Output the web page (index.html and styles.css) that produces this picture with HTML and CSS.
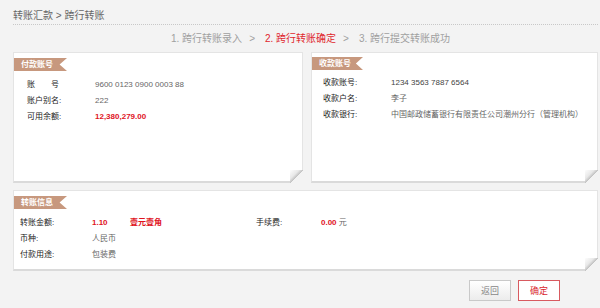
FILE: index.html
```html
<!DOCTYPE html>
<html lang="zh-CN">
<head>
    <meta charset="UTF-8">
    <meta name="viewport" content="width=device-width, initial-scale=1.0">
    <title>跨行转账确定</title>
    <link rel="stylesheet" href="styles.css">
</head>
<body>
    <div class="page">
        <div class="crumb">转账汇款 &gt; 跨行转账</div>

        <div class="steps">
            <span>1. 跨行转账录入</span>
            <span class="sep">&gt;</span>
            <span class="active">2. 跨行转账确定</span>
            <span class="sep">&gt;</span>
            <span>3. 跨行提交转账成功</span>
        </div>

        <div class="cards">
            <div class="card card-pay">
                <div class="ribbon">付款账号</div>
                <div class="rows">
                    <div class="row"><span class="label">账&emsp;&emsp;号</span><span class="value">9600 0123 0900 0003 88</span></div>
                    <div class="row"><span class="label">账户别名:</span><span class="value">222</span></div>
                    <div class="row"><span class="label">可用余额:</span><span class="value money">12,380,279.00</span></div>
                </div>
            </div>
            <div class="card card-recv">
                <div class="ribbon">收款账号</div>
                <div class="rows">
                    <div class="row"><span class="label">收款账号:</span><span class="value dark">1234 3563 7887 6564</span></div>
                    <div class="row"><span class="label">收款户名:</span><span class="value">李子</span></div>
                    <div class="row"><span class="label">收款银行:</span><span class="value">中国邮政储蓄银行有限责任公司潮州分行（管理机构）</span></div>
                </div>
            </div>
        </div>

        <div class="card card-info">
            <div class="ribbon">转账信息</div>
            <div class="info">
                <div class="rows">
                    <div class="row"><span class="label">转账金额:</span><span class="value money amount">1.10</span><span class="money">壹元壹角</span></div>
                    <div class="row"><span class="label">币种:</span><span class="value">人民币</span></div>
                    <div class="row"><span class="label">付款用途:</span><span class="value">包装费</span></div>
                </div>
                <div class="rows fee">
                    <div class="row"><span class="label">手续费:</span><span class="money">0.00</span>&nbsp;<span class="value">元</span></div>
                </div>
            </div>
        </div>

        <div class="actions">
            <button class="btn">返回</button>
            <button class="btn btn-ok">确定</button>
        </div>
    </div>
</body>
</html>
```

FILE: styles.css
```css
body { margin: 0; background: #f3f3f3; font-family: "Liberation Sans", "Noto Sans CJK SC", sans-serif; color: #333; }
.page { padding: 0 2px 0 13px; }

.crumb { padding-top: 10px; height: 12px; line-height: 12px; padding-bottom: 2px; font-size: 10px; color: #666; border-bottom: 1px dotted #c8c8c8; }

.steps { display: flex; margin-top: 8px; padding-left: 158px; height: 12px; line-height: 12px; font-size: 10px; color: #a0a0a0; white-space: nowrap; }
.steps .sep { margin: 0 10px 0 7px; }
.steps .active { color: #e0262d; }

.cards { display: flex; gap: 8px; margin-top: 7px; }
.card { position: relative; background: #fff; border: 1px solid #e4e4e4; border-bottom: 2px solid #dadada; box-sizing: border-box; }
.card::after { content: ""; position: absolute; right: -1px; bottom: -2px; width: 13px; height: 13px; background: linear-gradient(135deg, #fdfdfd 0%, #e8e8e8 35%, #c4c4c4 50%, #f3f3f3 51%); }
.card-pay { width: 290px; height: 131px; }
.card-recv { width: 287px; height: 131px; }
.card-info { width: 585px; height: 81px; margin-top: 7px; }

.ribbon { width: 46px; height: 13px; line-height: 13px; margin-top: 5px; padding-left: 7px; font-size: 8px; font-weight: bold; color: #fff; background: #c7987e; clip-path: polygon(0 0, 100% 0, 86% 50%, 100% 100%, 0 100%); }
.card-recv .ribbon { margin-top: 4px; width: 44px; }

.rows { margin-top: 6px; }
.row { height: 16px; line-height: 16px; font-size: 8px; white-space: nowrap; }
.label { display: inline-block; color: #222; }
.value { color: #666; }
.value.dark { color: #444; }
.money { color: #e0141e; font-weight: bold; }

.card-pay .rows { padding-left: 13px; }
.card-pay .label { width: 68px; }
.card-recv .rows { padding-left: 11px; margin-top: 5px; }
.card-recv .label { width: 68px; }

.info { display: flex; }
.info .rows { padding-left: 6px; width: 236px; }
.info .label { width: 72px; }
.info .amount { display: inline-block; width: 38px; }
.info .fee { padding-left: 0; width: auto; }
.info .fee .label { width: 65px; }

.actions { display: flex; justify-content: flex-end; gap: 7px; margin-top: 9px; padding-right: 38px; }
.btn { width: 42px; height: 21px; padding: 0; font-size: 9px; font-family: inherit; color: #888; background: linear-gradient(#fff, #ececec); border: 1px solid #c9c9c9; cursor: pointer; }
.btn-ok { color: #d9262d; background: #fff; border-color: #d85a60; }
```
